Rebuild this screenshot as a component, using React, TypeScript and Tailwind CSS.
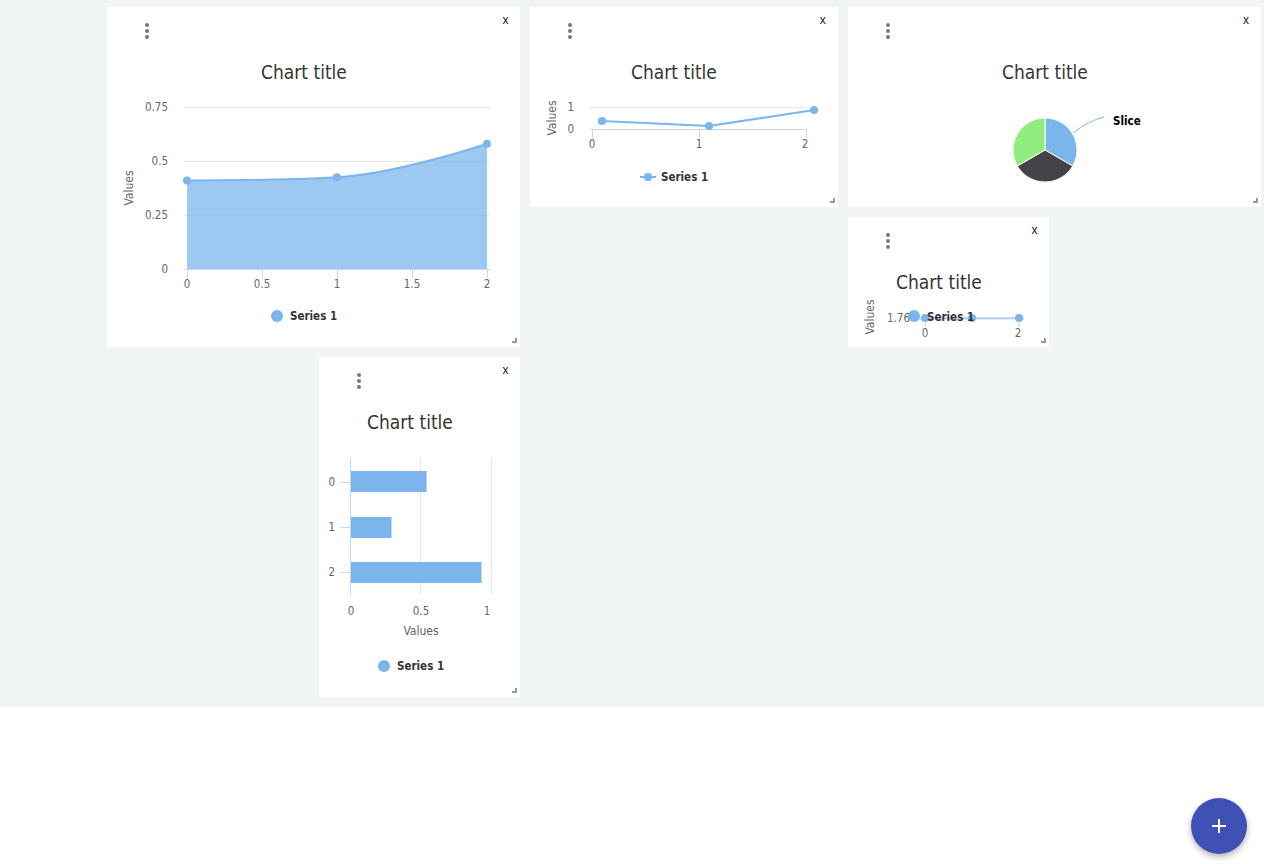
import React from 'react';

const BLUE = '#7cb5ec';
const AXIS = '#ccd6eb';
const GRID = '#e6e6e6';
const LABEL = '#666666';
const TITLE = '#333333';

function Widget({ className, children }: { className: string; children: React.ReactNode }) {
  return (
    <div className={`relative bg-white ${className}`}>
      {children}
      {/* drag menu */}
      <div className="absolute left-[38px] top-[16px] flex flex-col gap-[2px]">
        <span className="block w-[4px] h-[4px] rounded-full bg-[#777777]" />
        <span className="block w-[4px] h-[4px] rounded-full bg-[#777777]" />
        <span className="block w-[4px] h-[4px] rounded-full bg-[#777777]" />
      </div>
      <span className="absolute right-[12px] top-[7px] text-[12px] leading-none text-[#1a1a1a] font-['Liberation_Sans',sans-serif]">
        x
      </span>
      <div className="absolute right-[3px] bottom-[4px] w-[5px] h-[5px] border-r-2 border-b-2 border-black/40" />
    </div>
  );
}

function Title({ x }: { x: number }) {
  return (
    <text x={x} y={65} textAnchor="middle" dominantBaseline="central" fontSize={19} fill={TITLE}>
      Chart title
    </text>
  );
}

function YTitle({ x, y }: { x: number; y: number }) {
  return (
    <text
      x={x}
      y={y}
      transform={`rotate(-90 ${x} ${y})`}
      textAnchor="middle"
      dominantBaseline="central"
      fontSize={12}
      fill={LABEL}
    >
      Values
    </text>
  );
}

function Label({ x, y, anchor = 'middle', children }: { x: number; y: number; anchor?: 'start' | 'middle' | 'end'; children: React.ReactNode }) {
  return (
    <text x={x} y={y} textAnchor={anchor} dominantBaseline="central" fontSize={11.5} fill={LABEL}>
      {children}
    </text>
  );
}

function LegendText({ x, y }: { x: number; y: number }) {
  return (
    <text x={x} y={y} dominantBaseline="central" fontSize={11.5} fontWeight="bold" fill={TITLE}>
      Series 1
    </text>
  );
}

const chartFont = "block w-full h-full font-['DejaVu_Sans_Condensed','DejaVu_Sans',sans-serif]";

function AreaChart() {
  const line = 'M80,173.4 C80,173.4 170,173.4 230,170.2 C290,167 380,136.7 380,136.7';
  return (
    <svg className={chartFont}>
      <Title x={197} />
      {[100, 154, 208].map((y) => (
        <line key={y} x1={77} x2={383} y1={y + 0.5} y2={y + 0.5} stroke={GRID} />
      ))}
      <path d={`${line} L380,262 L80,262 Z`} fill={BLUE} fillOpacity={0.75} />
      <path d={line} fill="none" stroke={BLUE} strokeWidth={2} />
      {[[80, 173.4], [230, 170.2], [380, 136.7]].map(([x, y]) => (
        <circle key={x} cx={x} cy={y} r={4} fill={BLUE} />
      ))}
      <line x1={77} x2={383} y1={262.5} y2={262.5} stroke={AXIS} />
      {[80, 155, 230, 305, 380].map((x) => (
        <line key={x} x1={x + 0.5} x2={x + 0.5} y1={262} y2={271} stroke={AXIS} />
      ))}
      <Label x={61} y={100} anchor="end">0.75</Label>
      <Label x={61} y={154} anchor="end">0.5</Label>
      <Label x={61} y={208} anchor="end">0.25</Label>
      <Label x={61} y={262} anchor="end">0</Label>
      <Label x={80} y={277}>0</Label>
      <Label x={155} y={277}>0.5</Label>
      <Label x={230} y={277}>1</Label>
      <Label x={305} y={277}>1.5</Label>
      <Label x={380} y={277}>2</Label>
      <YTitle x={22} y={181} />
      <circle cx={170} cy={309} r={6} fill={BLUE} />
      <LegendText x={183} y={309} />
    </svg>
  );
}

function LineChart() {
  return (
    <svg className={chartFont}>
      <Title x={144} />
      <line x1={60} x2={277} y1={100.5} y2={100.5} stroke={GRID} />
      <line x1={60} x2={277} y1={122.5} y2={122.5} stroke={AXIS} />
      {[62, 169, 276].map((x) => (
        <line key={x} x1={x + 0.5} x2={x + 0.5} y1={122} y2={131} stroke={AXIS} />
      ))}
      <polyline points="72,114 179,119 284,103" fill="none" stroke={BLUE} strokeWidth={2} />
      {[[72, 114], [179, 119], [284, 103]].map(([x, y]) => (
        <circle key={x} cx={x} cy={y} r={4} fill={BLUE} />
      ))}
      <Label x={44} y={100} anchor="end">1</Label>
      <Label x={44} y={122} anchor="end">0</Label>
      <Label x={62} y={137}>0</Label>
      <Label x={169} y={137}>1</Label>
      <Label x={275} y={137}>2</Label>
      <YTitle x={22} y={111} />
      <line x1={110} x2={126} y1={170} y2={170} stroke={BLUE} strokeWidth={2} />
      <circle cx={118} cy={170} r={4} fill={BLUE} />
      <LegendText x={131} y={170} />
    </svg>
  );
}

function PieChart() {
  const c = { x: 197, y: 143 };
  return (
    <svg className={chartFont}>
      <Title x={197} />
      <path d={`M${c.x},${c.y} L197,111 A32,32 0 0 1 224.71,159 Z`} fill="#7cb5ec" stroke="#fff" />
      <path d={`M${c.x},${c.y} L224.71,159 A32,32 0 0 1 169.29,159 Z`} fill="#434348" stroke="#fff" />
      <path d={`M${c.x},${c.y} L169.29,159 A32,32 0 0 1 197,111 Z`} fill="#90ed7d" stroke="#fff" />
      <path d="M225,126 Q240,114 256,110" fill="none" stroke={BLUE} />
      <text x={265} y={114} dominantBaseline="central" fontSize={11.5} fontWeight="bold" fill="#000">
        Slice
      </text>
    </svg>
  );
}

function MiniChart() {
  return (
    <svg className={chartFont}>
      <Title x={91} />
      <YTitle x={22} y={100} />
      <Label x={62} y={101} anchor="end">1.76</Label>
      <line x1={70} x2={176} y1={101.5} y2={101.5} stroke={AXIS} strokeWidth={2} />
      <line x1={77} x2={171} y1={101} y2={101} stroke={BLUE} strokeOpacity={0.5} />
      {[77, 171].map((x) => (
        <line key={x} x1={x + 0.5} x2={x + 0.5} y1={101} y2={110} stroke={AXIS} />
      ))}
      {[77, 124, 171].map((x) => (
        <circle key={x} cx={x} cy={101} r={4} fill={BLUE} />
      ))}
      <Label x={77} y={116}>0</Label>
      <Label x={170} y={116}>2</Label>
      <circle cx={66} cy={99} r={6} fill={BLUE} />
      <LegendText x={79} y={100} />
    </svg>
  );
}

function BarChart() {
  const bars = [
    { y: 114, w: 75.5, label: '0', cy: 125 },
    { y: 160, w: 40.5, label: '1', cy: 170 },
    { y: 205, w: 130.5, label: '2', cy: 215 },
  ];
  return (
    <svg className={chartFont}>
      <Title x={91} />
      {[101.5, 172.5].map((x) => (
        <line key={x} x1={x} x2={x} y1={101} y2={238} stroke={GRID} />
      ))}
      <line x1={31.5} x2={31.5} y1={101} y2={238} stroke={AXIS} />
      {bars.map((b) => (
        <g key={b.label}>
          <line x1={22} x2={31} y1={b.cy + 0.5} y2={b.cy + 0.5} stroke={AXIS} />
          <rect x={32} y={b.y} width={b.w} height={21} fill={BLUE} />
          <Label x={16} y={b.cy} anchor="end">{b.label}</Label>
        </g>
      ))}
      <Label x={32} y={254}>0</Label>
      <Label x={102} y={254}>0.5</Label>
      <Label x={168} y={254}>1</Label>
      <text x={102} y={274} textAnchor="middle" dominantBaseline="central" fontSize={12} fill={LABEL}>
        Values
      </text>
      <circle cx={65} cy={309} r={6} fill={BLUE} />
      <LegendText x={78} y={309} />
    </svg>
  );
}

export default function App() {
  return (
    <div className="min-h-screen bg-white">
      <div className="grid grid-cols-12 auto-rows-[60px] gap-[10px] bg-[#f1f4f5] pt-[7px] pb-[10px] pl-[1.5px] pr-[3px]">
        <Widget className="col-start-2 col-span-4 row-start-1 row-span-5">
          <AreaChart />
        </Widget>
        <Widget className="col-start-6 col-span-3 row-start-1 row-span-3">
          <LineChart />
        </Widget>
        <Widget className="col-start-9 col-span-4 row-start-1 row-span-3">
          <PieChart />
        </Widget>
        <Widget className="col-start-9 col-span-2 row-start-4 row-span-2">
          <MiniChart />
        </Widget>
        <Widget className="col-start-4 col-span-2 row-start-6 row-span-5">
          <BarChart />
        </Widget>
      </div>
      <button className="fixed right-[17px] bottom-[10px] flex h-[56px] w-[56px] items-center justify-center rounded-full bg-[#3f51b5] shadow-[0_3px_6px_rgba(0,0,0,0.3)]">
        <svg width="16" height="16" viewBox="0 0 16 16">
          <path d="M8 1v14M1 8h14" stroke="#fff" strokeWidth="2" />
        </svg>
      </button>
    </div>
  );
}
